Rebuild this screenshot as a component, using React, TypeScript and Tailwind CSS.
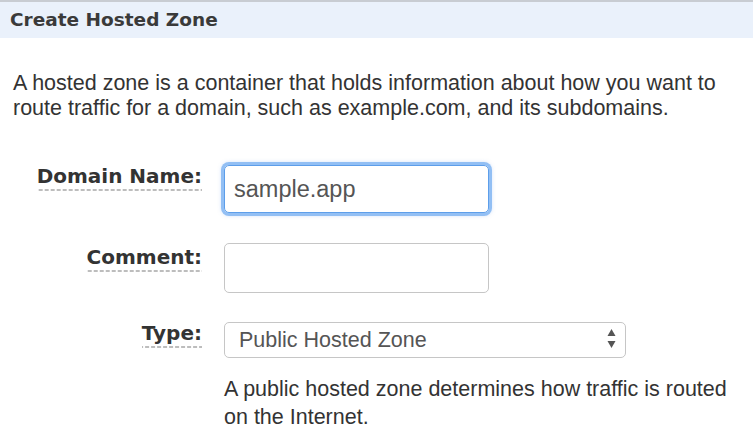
import { useState } from 'react'

const labelCls =
  "font-['DejaVu_Sans',Verdana,sans-serif] font-bold text-[20px] leading-[22px] text-[#333] pb-[4px] bg-[linear-gradient(to_right,#bdbdbd_4px,transparent_4px)] bg-[length:6px_2px] bg-repeat-x bg-bottom"

export default function App() {
  const [domain, setDomain] = useState('sample.app')
  const [comment, setComment] = useState('')

  return (
    <div className="w-[753px] h-[440px] overflow-hidden bg-white font-['Liberation_Sans',Arial,sans-serif] text-[#333]">
      <div className="border-t-2 border-[#c8ccd2] bg-[#eaf1fb] h-[38px] flex items-center px-[10px]">
        <h2 className="font-['DejaVu_Sans',Verdana,sans-serif] font-bold text-[18.5px] text-[#3a3a3a]">Create Hosted Zone</h2>
      </div>

      <p className="px-[13px] pt-[33px] text-[21.5px] leading-[25px] text-[#333]">
        A hosted zone is a container that holds information about how you want to route traffic for a domain, such as example.com, and its subdomains.
      </p>

      <div className="mt-[44px] grid grid-cols-[202px_1fr] gap-x-[22px] items-start">
        <div className="flex justify-end items-start">
          <span className={labelCls}>Domain Name:</span>
        </div>
        <div>
          <input
            value={domain}
            onChange={(e) => setDomain(e.target.value)}
            className="block w-[265px] h-[48px] rounded-[5px] border border-[#5d9eea] ring-[3px] ring-[#92bff4] shadow-[0_0_4px_2px_rgba(120,170,240,0.5)] px-[9px] text-[23.5px] text-[#555] outline-none"
          />
        </div>

        <div className="flex justify-end items-start pt-[3px] mt-[30px]">
          <span className={labelCls}>Comment:</span>
        </div>
        <div className="mt-[30px]">
          <input
            value={comment}
            onChange={(e) => setComment(e.target.value)}
            className="block w-[265px] h-[50px] rounded-[5px] border border-[#c6c6c6] px-[9px] text-[23.5px] outline-none"
          />
        </div>

        <div className="flex justify-end items-start mt-[29px]">
          <span className={labelCls}>Type:</span>
        </div>
        <div className="mt-[29px]">
          <div className="relative w-[402px] h-[36px] rounded-[5px] border border-[#c6c6c6] flex items-center pl-[14px]">
            <span className="text-[21.5px] text-[#555]">Public Hosted Zone</span>
            <svg className="absolute right-[9px] top-[6px]" width="9" height="20" viewBox="0 0 9 20">
              <path d="M4.5 0 L8.5 7 L0.5 7 Z" fill="#555" />
              <path d="M4.5 19 L8.5 12 L0.5 12 Z" fill="#555" />
            </svg>
          </div>
          <p className="mt-[17px] text-[21.5px] leading-[28px] text-[#333]">
            A public hosted zone determines how traffic is routed on the Internet.
          </p>
        </div>
      </div>
    </div>
  )
}
